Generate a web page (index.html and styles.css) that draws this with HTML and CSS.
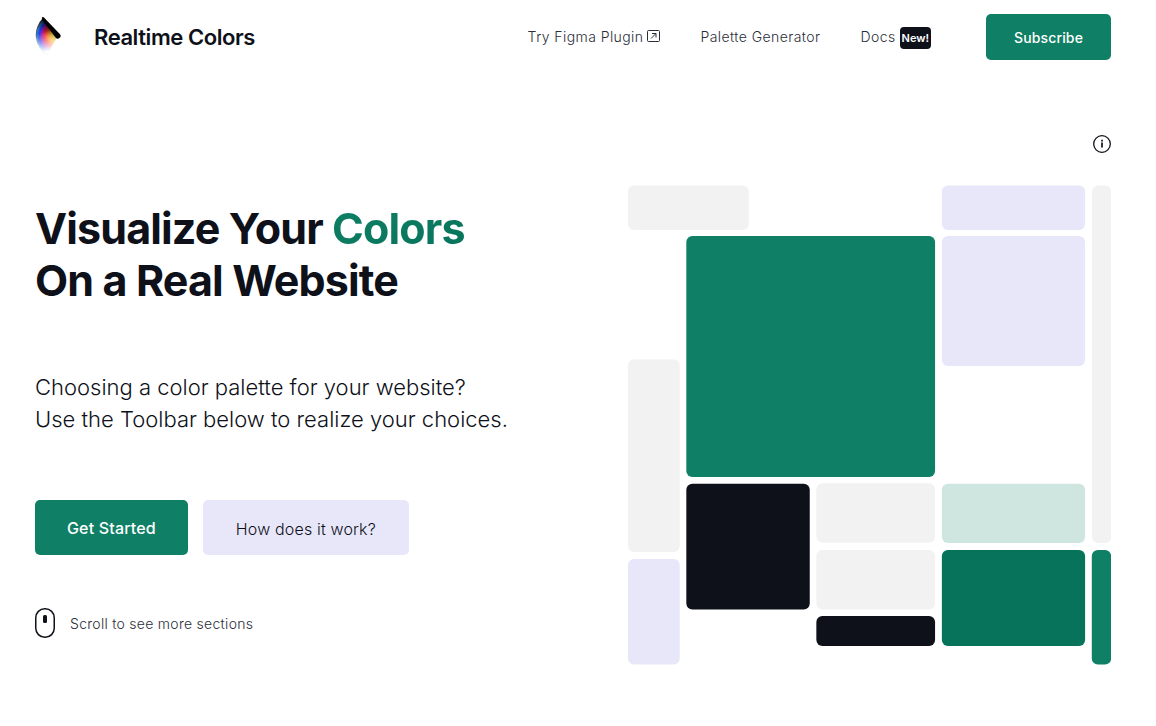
FILE: index.html
```html
<!DOCTYPE html>
<html lang="en">
<head>
    <meta charset="UTF-8">
    <meta name="viewport" content="width=device-width, initial-scale=1.0">
    <title>Realtime Colors</title>
    <link rel="stylesheet" href="styles.css">
</head>
<body>

    <header class="header">
        <a href="#" class="brand">
            <svg class="logo" width="27" height="42" viewBox="0 0 27 42" aria-hidden="true">
                <defs>
                    <radialGradient id="hue" gradientUnits="userSpaceOnUse" cx="23" cy="20" r="24">
                        <stop offset="0.1" stop-color="#ffee30"/>
                        <stop offset="0.28" stop-color="#ffc400"/>
                        <stop offset="0.42" stop-color="#ff6a10"/>
                        <stop offset="0.55" stop-color="#f0202c"/>
                        <stop offset="0.67" stop-color="#a01cb0"/>
                        <stop offset="0.78" stop-color="#2a38e8"/>
                        <stop offset="0.87" stop-color="#1480e8"/>
                        <stop offset="0.91" stop-color="#555"/>
                        <stop offset="1" stop-color="#555"/>
                    </radialGradient>
                    <linearGradient id="dark" gradientUnits="userSpaceOnUse" x1="13" y1="7" x2="6" y2="16">
                        <stop offset="0" stop-color="#000" stop-opacity="0.8"/>
                        <stop offset="1" stop-color="#000" stop-opacity="0"/>
                    </linearGradient>
                    <linearGradient id="light" gradientUnits="userSpaceOnUse" x1="9" y1="16" x2="14" y2="35">
                        <stop offset="0" stop-color="#fff" stop-opacity="0"/>
                        <stop offset="1" stop-color="#fff"/>
                    </linearGradient>
                </defs>
                <path d="M23 20 8 2A23.500 23.500 0 0 0 12 39Z" fill="url(#hue)"/>
                <path d="M23 20 8 2A23.500 23.500 0 0 0 12 39Z" fill="url(#dark)"/>
                <path d="M23 20 8 2A23.500 23.500 0 0 0 12 39Z" fill="url(#light)" stroke="url(#light)"/>
                <path d="M6.800 2Q7.200 0.500 8.700 1.200L24.800 18A2.700 2.700 0 0 1 20.800 21.700L8 5Z" fill="#000"/>
            </svg>
            <span class="brand-name">Realtime Colors</span>
        </a>
        <nav class="nav">
            <a href="#" class="nav-link">Try Figma Plugin
                <svg width="13" height="13" viewBox="0 0 13 13" fill="none" stroke="currentColor" aria-hidden="true">
                    <rect x="0.500" y="0.500" width="12" height="11" rx="1"/>
                    <path d="M4 8.500 8.800 3.700M5 3.500H9V7.500"/>
                </svg>
            </a>
            <a href="#" class="nav-link">Palette Generator</a>
            <a href="#" class="nav-link">Docs <span class="tag">New!</span></a>
            <button class="btn btn-primary btn-small">Subscribe</button>
        </nav>
    </header>

    <main class="hero">
        <section class="intro">
            <h1>Visualize Your <span class="accent">Colors</span><br>On a Real Website</h1>
            <p class="lead">Choosing a color palette for your website?<br>Use the Toolbar below to realize your choices.</p>
            <div class="actions">
                <button class="btn btn-primary">Get Started</button>
                <button class="btn btn-secondary">How does it work?</button>
            </div>
            <div class="scroll">
                <svg width="20" height="30" viewBox="0 0 20 30" aria-hidden="true">
                    <rect x="0.750" y="0.750" width="18.500" height="28.500" rx="9" fill="none" stroke="#0e1119" stroke-width="1.500"/>
                    <rect x="8" y="7" width="4" height="8" rx="1.500" fill="#0e1119"/>
                </svg>
                <span>Scroll to see more sections</span>
            </div>
        </section>

        <section class="preview">
            <button class="info" aria-label="Info">
                <svg width="18" height="20" viewBox="0 0 18 20" aria-hidden="true">
                    <circle cx="9" cy="10" r="8.300" fill="none" stroke="#0e1119" stroke-width="1.300"/>
                    <path d="M9 8.500V13.500M9 5.800V7.500" stroke="#0e1119" stroke-width="1.700"/>
                </svg>
            </button>
            <!-- Color blocks -->
            <svg class="mosaic" viewBox="0 0 483 480" aria-hidden="true">
                <g class="gray">
                    <rect x="0" y="0.500" width="120.700" height="44.500" rx="6"/>
                    <rect x="464" y="0.500" width="19" height="357.500" rx="6"/>
                    <rect x="0" y="174.500" width="51.700" height="192.500" rx="6"/>
                    <rect x="188.300" y="298.300" width="118.700" height="59.500" rx="6"/>
                    <rect x="188.300" y="365" width="118.700" height="59.500" rx="6"/>
                </g>
                <g class="lavender">
                    <rect x="313.800" y="0.500" width="143.200" height="44.500" rx="6"/>
                    <rect x="313.800" y="51" width="143.200" height="130" rx="6"/>
                    <rect x="0" y="374" width="51.700" height="105.500" rx="6"/>
                </g>
                <g class="green">
                    <rect x="58.300" y="51" width="248.700" height="241" rx="6"/>
                    <rect x="463.700" y="365" width="19.300" height="114.500" rx="6"/>
                </g>
                <g class="dark">
                    <rect x="58.300" y="298.700" width="123.400" height="125.800" rx="6"/>
                    <rect x="188.300" y="431" width="118.700" height="30" rx="6"/>
                </g>
                <rect class="mint" x="313.800" y="298.700" width="143.200" height="59.200" rx="6"/>
                <rect class="deep" x="313.800" y="365" width="143.200" height="96" rx="6"/>
            </svg>
        </section>
    </main>

</body>
</html>
```
FILE: styles.css
```css
* {
    box-sizing: border-box;
}

body {
    margin: 0;
    padding: 14px 45px 0 35px;
    font-family: Inter, "Liberation Sans", sans-serif;
    font-weight: 300;
    color: #0e1119;
    background-color: #fff;
}

a {
    color: inherit;
    text-decoration: none;
}

svg {
    display: block;
}

.header {
    display: flex;
    justify-content: space-between;
    align-items: center;
}

.brand {
    display: flex;
    align-items: center;
    gap: 32px;
}

.brand-name {
    font-size: 22px;
    font-weight: 600;
    letter-spacing: -0.02em;
}

.nav {
    display: flex;
    align-items: center;
    gap: 40px;
}

.nav-link {
    display: flex;
    align-items: center;
    gap: 4px;
    padding-bottom: 2px;
    font-size: 14px;
    letter-spacing: 0.03em;
    color: #2b2e38;
}

.tag {
    margin: 4px 0 0;
    padding: 0 2px;
    border-radius: 4px;
    font-size: 11px;
    font-weight: 600;
    line-height: 22px;
    letter-spacing: 0;
    color: #fff;
    background-color: #0e1119;
}

.btn {
    height: 55px;
    padding: 0 32px;
    border: none;
    border-radius: 5px;
    font-family: inherit;
    font-size: 16px;
    letter-spacing: 0.01em;
    cursor: pointer;
}

.btn-primary {
    font-weight: 500;
    color: #fff;
    background-color: #0f8065;
}

.btn-secondary {
    padding: 2px 33px 0;
    font-weight: 300;
    color: #0e1119;
    background-color: #e8e7fa;
}

.btn-small {
    height: 46px;
    margin-left: 15px;
    padding: 0 28px;
    font-size: 14px;
}

.hero {
    display: flex;
    justify-content: space-between;
    padding-top: 74px;
}

.intro {
    padding-top: 68px;
}

h1 {
    margin: 0;
    font-size: 43px;
    font-weight: 700;
    line-height: 52px;
    letter-spacing: -0.02em;
}

.accent {
    color: transparent;
    background: linear-gradient(160deg, #0f8065, #06735a);
    background-clip: text;
    -webkit-background-clip: text;
}

.lead {
    margin: 65px 0;
    font-size: 22px;
    line-height: 32px;
}

.actions {
    display: flex;
    gap: 15px;
}

.scroll {
    display: flex;
    align-items: center;
    gap: 15px;
    margin-top: 53px;
    font-size: 14px;
    letter-spacing: 0.02em;
    color: #2b2e38;
}

.preview {
    display: flex;
    flex-direction: column;
    width: 44.9%;
}

.info {
    align-self: flex-end;
    padding: 0;
    border: none;
    background: none;
    cursor: pointer;
}

.mosaic {
    width: 100%;
    margin-top: 31px;
}

.gray {
    fill: #f2f2f2;
}

.lavender {
    fill: #e8e7fa;
}

.green {
    fill: #0f8065;
}

.dark {
    fill: #0e1119;
}

.mint {
    fill: #cfe6e0;
}

.deep {
    fill: #06735a;
}
```
